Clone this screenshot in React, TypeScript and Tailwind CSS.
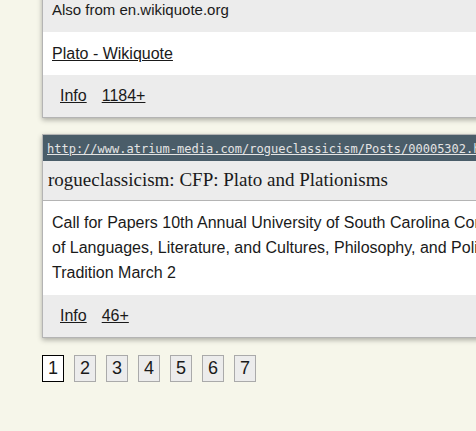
const results = [
  {
    url: "http://www.atrium-media.com/rogueclassicism/Posts/00005302.html",
    title: "rogueclassicism: CFP: Plato and Plationisms",
    lines: [
      "Call for Papers 10th Annual University of South Carolina Comparative Literature Conference",
      "of Languages, Literature, and Cultures, Philosophy, and Political Science: Plato and the Platonic",
      "Tradition March 2",
    ],
    count: "46+",
  },
];

const pages = [1, 2, 3, 4, 5, 6, 7];

function FooterLinks({ count }: { count: string }) {
  return (
    <div className="flex gap-[15px] bg-[#ececec] pl-[17px] pt-[10px] pb-[10px] leading-[22px]">
      <a href="#" className="underline">
        Info
      </a>
      <a href="#" className="underline">
        {count}
      </a>
    </div>
  );
}

export default function App() {
  return (
    <div
      className="h-[431px] overflow-hidden bg-[#f6f6ea] pl-[42px] text-[16px] text-[#1a1a1a]"
      style={{ fontFamily: '"Liberation Sans", Arial, sans-serif' }}
    >
      <div className="mt-[-12px] w-[700px] border border-[#b4b4b4] shadow-[0_2px_5px_rgba(0,0,0,0.3)]">
        <div className="bg-[#ececec] pl-[9px] pt-[11px] pb-[12px] text-[15px] leading-[20px]">
          Also from en.wikiquote.org
        </div>
        <div className="bg-white pl-[9px] pt-[11px] pb-[11px] leading-[21px]">
          <a href="#" className="underline">
            Plato - Wikiquote
          </a>
        </div>
        <FooterLinks count="1184+" />
      </div>

      {results.map((r) => (
        <div
          key={r.url}
          className="mt-[16px] w-[700px] border border-[#b4b4b4] shadow-[0_2px_5px_rgba(0,0,0,0.3)]"
        >
          <div className="h-[26px] bg-[#4a5d69] pl-[4px] pt-[7px] text-[12px] leading-[15px] text-[#e4e4e4]">
            <a
              href="#"
              className="underline"
              style={{ fontFamily: '"DejaVu Sans Mono", monospace' }}
            >
              {r.url}
            </a>
          </div>
          <div
            className="border-b border-[#b4b4b4] bg-[#ececec] pl-[5px] pt-[8px] pb-[10px] text-[19px] leading-[21px]"
            style={{ fontFamily: '"Liberation Serif", "Times New Roman", serif' }}
          >
            {r.title}
          </div>
          <div className="bg-white pl-[9px] pt-[9px] pb-[10px] leading-[25px]">
            {r.lines.map((l) => (
              <div key={l} className="whitespace-nowrap">
                {l}
              </div>
            ))}
          </div>
          <FooterLinks count={r.count} />
        </div>
      ))}

      <div className="mt-[17px] flex gap-[10px]">
        {pages.map((p) => (
          <a
            key={p}
            href="#"
            className={
              p === 1
                ? "flex h-[27px] w-[22px] items-center justify-center border border-black bg-white text-[18px]"
                : "flex h-[27px] w-[22px] items-center justify-center border border-[#aaaaaa] bg-[#ececec] text-[18px]"
            }
          >
            {p}
          </a>
        ))}
      </div>
    </div>
  );
}
